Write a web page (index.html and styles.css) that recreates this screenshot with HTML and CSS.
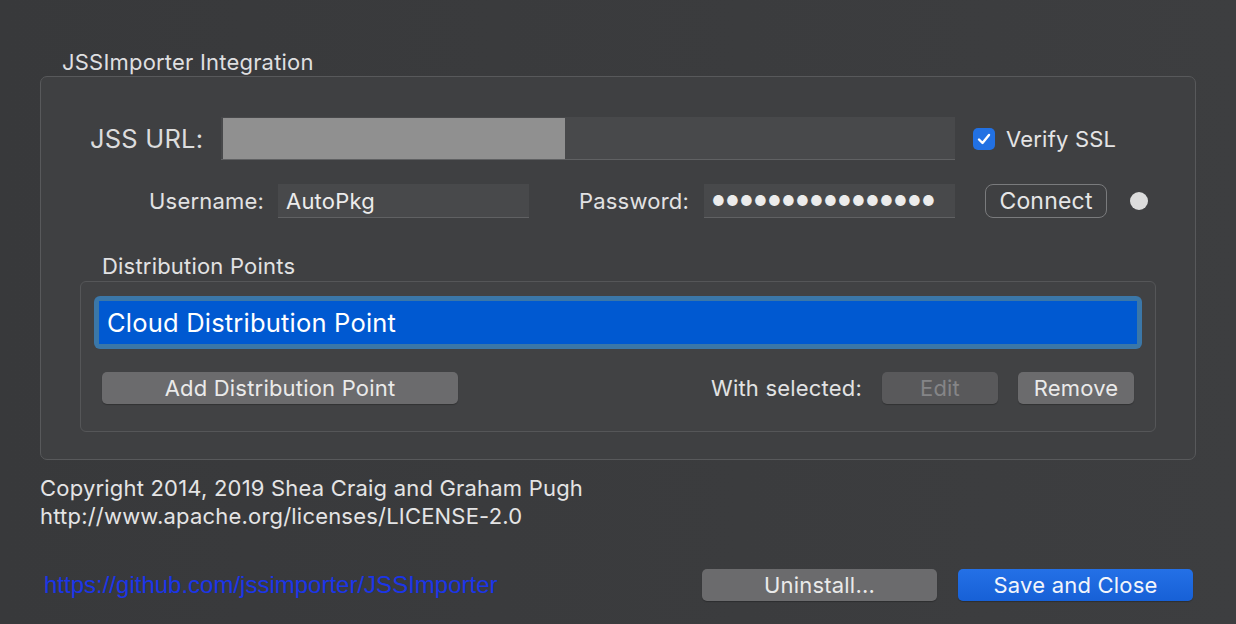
FILE: index.html
```html
<!DOCTYPE html>
<html>
<head>
  <meta charset="utf-8">
  <title>JSSImporter Integration</title>
  <link rel="stylesheet" href="styles.css">
</head>

<body>
  <div class="window">
    <div class="group-title">JSSImporter Integration</div>
    <div class="group">
      <div class="url-row">
        <label class="url-label">JSS URL:</label>
        <div class="field url-field"><span class="redacted"></span></div>
        <span class="checkbox">
          <svg width="14" height="12" viewBox="0 0 14 12"><path d="M2 6.5 L5.5 10 L12 2" fill="none" stroke="#fff" stroke-width="2.4" stroke-linecap="round" stroke-linejoin="round"/></svg>
        </span>
        <span class="check-label">Verify SSL</span>
      </div>

      <div class="cred-row">
        <label class="user-label">Username:</label>
        <div class="field small-field">AutoPkg</div>
        <label class="pass-label">Password:</label>
        <div class="field small-field dots">&#9679;&#9679;&#9679;&#9679;&#9679;&#9679;&#9679;&#9679;&#9679;&#9679;&#9679;&#9679;&#9679;&#9679;&#9679;&#9679;</div>
        <button class="connect">Connect</button>
        <span class="status-dot"></span>
      </div>

      <div class="sub-title">Distribution Points</div>
      <div class="inner-group">
        <div class="list-ring">
          <div class="list-item">Cloud Distribution Point</div>
        </div>
        <div class="dp-buttons">
          <button class="btn add-btn">Add Distribution Point</button>
          <span class="spacer"></span>
          <span class="with-label">With selected:</span>
          <button class="btn small-btn disabled">Edit</button>
          <button class="btn small-btn">Remove</button>
        </div>
      </div>
    </div>

    <p class="copyright">Copyright 2014, 2019 Shea Craig and Graham Pugh<br>http://www.apache.org/licenses/LICENSE-2.0</p>

    <div class="footer">
      <a class="repo-link" href="#">https://github.com/jssimporter/JSSImporter</a>
      <span class="spacer"></span>
      <button class="btn footer-btn">Uninstall...</button>
      <button class="btn footer-btn primary">Save and Close</button>
    </div>
  </div>
</body>
</html>
```

FILE: styles.css
```css
* {
    box-sizing: border-box;
}

body {
    margin: 0;
    width: 1236px;
    height: 624px;
    overflow: hidden;
    background: linear-gradient(90deg, #38393b, #3d3e40);
    font-family: Inter, "Noto Sans", sans-serif;
    letter-spacing: 0.2px;
    color: #e2e2e3;
}

.window {
    padding-top: 50px;
}

.group-title {
    margin-left: 62px;
    font-size: 22px;
    line-height: 24px;
    color: #dfdfe0;
}

.group {
    margin: 2px 40px 0 40px;
    height: 384px;
    border: 1px solid #58595b;
    border-radius: 7px;
    background: #3f4042;
    padding-top: 40px;
}

.field {
    background: #48494b;
    border-bottom: 1px solid #606163;
    color: #ececec;
}

.url-row {
    display: flex;
    align-items: center;
    height: 43px;
}

.url-label {
    width: 180px;
    padding-left: 49px;
    font-size: 25.5px;
    color: #dcdcdd;
}

.url-field {
    width: 734px;
    height: 43px;
    padding: 1px 2px 1px 2px;
}

.redacted {
    display: block;
    width: 342px;
    height: 41px;
    background: #909090;
}

.checkbox {
    margin-left: 18px;
    width: 22px;
    height: 22px;
    border-radius: 5px;
    background: #2271e3;
    display: flex;
    align-items: center;
    justify-content: center;
}

.check-label {
    margin-left: 11px;
    font-size: 22px;
    color: #e4e4e5;
}

.cred-row {
    display: flex;
    align-items: center;
    margin-top: 24px;
    height: 34px;
}

.user-label {
    margin-left: 108px;
    width: 129px;
    font-size: 22px;
}

.pass-label {
    margin-left: 50px;
    width: 125px;
    font-size: 22px;
}

.small-field {
    width: 251px;
    height: 34px;
    padding: 0 8px;
    font-size: 22px;
    line-height: 34px;
}

.dots {
    font-size: 14px;
    letter-spacing: 1.2px;
    padding-left: 8px;
}

.connect {
    margin-left: 30px;
    width: 122px;
    height: 34px;
    border: 1px solid #7a7b7d;
    border-radius: 8px;
    background: transparent;
    color: #e6e6e7;
    font-family: inherit;
    font-size: 23px;
    letter-spacing: 0.2px;
    padding: 0;
}

.status-dot {
    margin-left: 23px;
    width: 18px;
    height: 18px;
    border-radius: 50%;
    background: #dcdcdc;
}

.sub-title {
    margin: 36px 0 0 61px;
    font-size: 22px;
    line-height: 24px;
}

.inner-group {
    margin: 3px 39px 0 39px;
    height: 151px;
    border: 1px solid #555658;
    border-radius: 6px;
    background: #414244;
    padding: 14px 13px 0 13px;
}

.list-ring {
    height: 53px;
    border-radius: 6px;
    background: #3b77a8;
    padding: 5px;
}

.list-item {
    height: 43px;
    background: #0059d1;
    color: #fff;
    font-size: 25.5px;
    line-height: 43px;
    padding-left: 8px;
}

.dp-buttons {
    display: flex;
    align-items: center;
    margin: 23px 8px 0 8px;
}

.spacer {
    flex: 1;
}

.btn {
    height: 32px;
    border: none;
    border-radius: 5px;
    background: #6b6b6d;
    color: #eaeaea;
    font-family: inherit;
    font-size: 22px;
    letter-spacing: 0.2px;
    padding: 0;
    box-shadow: 0 1px 1px rgba(0, 0, 0, 0.25);
}

.add-btn {
    width: 356px;
}

.with-label {
    font-size: 22px;
    margin-right: 20px;
}

.small-btn {
    width: 116px;
    margin-left: 20px;
}

.with-label + .small-btn {
    margin-left: 0;
}

.disabled {
    background: #59595b;
    color: #858587;
}

.copyright {
    margin: 14px 0 0 40px;
    font-size: 22px;
    line-height: 28px;
    color: #e4e4e5;
}

.footer {
    display: flex;
    align-items: center;
    margin: 39px 43px 0 44px;
}

.repo-link {
    font-family: "Liberation Sans", Arial, sans-serif;
    font-size: 24px;
    letter-spacing: 0;
    color: #1b35e8;
    text-decoration: none;
}

.footer-btn {
    width: 235px;
    margin-left: 21px;
}

.primary {
    background: linear-gradient(#2470e6, #1760d6);
    color: #f2f5fb;
}
```
